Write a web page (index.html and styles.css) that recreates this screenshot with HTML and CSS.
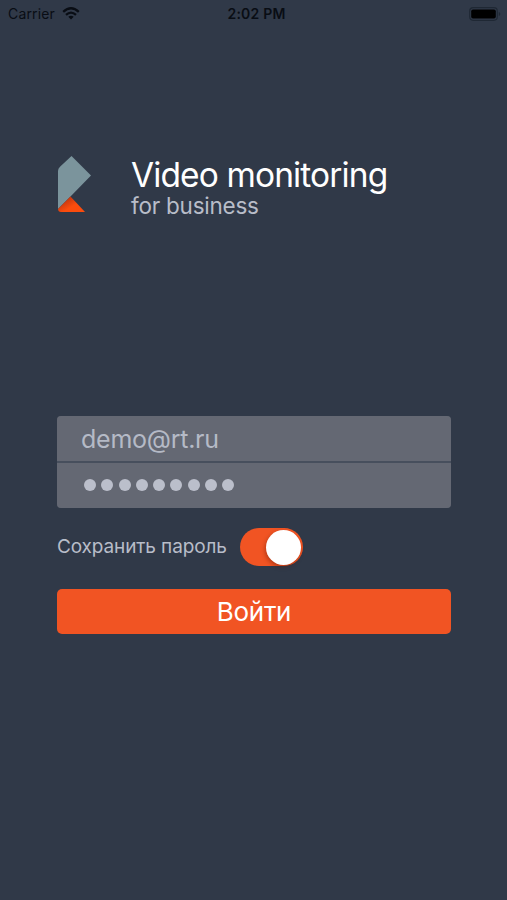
FILE: index.html
```html
<!DOCTYPE html>
<html lang="ru">
<head>
<meta charset="utf-8">
<title>Video monitoring</title>
<link rel="stylesheet" href="styles.css">
</head>
<body>
<header class="status">
  <div class="carrier"><span>Carrier</span>
    <svg class="wifi" viewBox="0 0 18 13" width="18" height="13" fill="none" stroke="#090d14" stroke-width="2.3"><path d="M1.2 4.8Q9-2.2 16.8 4.8M4 7.8Q9 3.4 14 7.8"/><path d="M6.3 9.7Q9 7.7 11.7 9.7L9 12.4Z" fill="#090d14" stroke="none"/></svg>
  </div>
  <div class="time">2:02 PM</div>
  <svg class="battery" viewBox="0 0 32 14" width="32" height="14"><rect x=".7" y=".7" width="27.6" height="12.6" rx="3.5" fill="none" stroke="#1f2834" stroke-width="1.2"/><rect x="2.2" y="2.4" width="24.6" height="9.2" rx="1.8" fill="#000"/><path d="M29.8 5v4q1.5-.5 1.5-2t-1.5-2Z" fill="#1f2834"/></svg>
</header>
<main>
  <div class="brand">
    <svg class="logo" viewBox="0 0 35 58" width="35" height="58">
      <defs><linearGradient id="fold" x1="0" y1="0" x2=".75" y2=".7"><stop offset=".25" stop-color="#b93310"/><stop offset=".8" stop-color="#fb4c0d"/></linearGradient></defs>
      <path d="M14.5 1 34 20.5 13.5 41.5 1 54V16Q1 13.5 3 11.7Z" fill="#7b949c"/>
      <path d="M13.5 41.5 28 57H4Q1.2 57 1 54Z" fill="url(#fold)"/>
    </svg>
    <div class="names">
      <h1>Video monitoring</h1>
      <p>for business</p>
    </div>
  </div>
  <form>
    <div class="fields">
      <div class="field"><span class="login">demo@rt.ru</span></div>
      <div class="field dots"><i></i><i></i><i></i><i></i><i></i><i></i><i></i><i></i><i></i></div>
    </div>
    <div class="save">
      <span class="label">Сохранить пароль</span>
      <span class="switch"><i></i></span>
    </div>
    <button type="button"><span>Войти</span></button>
  </form>
</main>
</body>
</html>
```
FILE: styles.css
```css
* { box-sizing: border-box; }
body {
  margin: 0;
  height: 900px;
  overflow: hidden;
  background: #303948;
  font-family: Inter, "Liberation Sans", sans-serif;
}
.status {
  display: grid;
  grid-template-columns: 1fr auto 1fr;
  align-items: center;
  height: 27px;
  padding: 0 6px 0 8px;
  color: #090d14;
  font-size: 14px;
}
.carrier { display: flex; align-items: center; gap: 7px; letter-spacing: .15px; }
.wifi { display: block; }
.time { padding-left: 4px; font-weight: 600; font-size: 14px; letter-spacing: .2px; }
.battery { justify-self: end; }
main { padding: 0 56px 0 57px; }
.brand { display: flex; align-items: flex-start; gap: 39px; padding-top: 128px; height: 389px; }
.names { padding-top: 1px; }
h1 {
  margin: 0;
  color: #fff;
  font-weight: 400;
  font-size: 33.5px;
  line-height: 39px;
  letter-spacing: -.88px;
  white-space: nowrap;
}
p {
  margin: 0;
  color: #b8bdc9;
  font-weight: 400;
  font-size: 22.5px;
  line-height: 22px;
  letter-spacing: -.23px;
}
.fields {
  display: grid;
  gap: 2px;
  border-radius: 4px;
  overflow: hidden;
  background: #474f5d;
}
.field {
  display: flex;
  align-items: center;
  height: 45px;
  padding-left: 24px;
  background: #646873;
}
.login { color: #b5bac6; font-size: 25px; font-weight: 400; letter-spacing: -.25px; }
.dots { gap: 5.25px; padding: 0 0 2px 27px; }
.dots i { width: 12px; height: 12px; border-radius: 50%; background: #bbbfcb; }
.save { display: flex; align-items: center; height: 38px; margin-top: 20px; }
.label { width: 183px; padding-bottom: 1px; color: #b8bdc9; font-size: 19px; font-weight: 400; letter-spacing: -.12px; white-space: nowrap; }
.switch {
  display: flex;
  justify-content: flex-end;
  width: 63px;
  height: 38px;
  padding: 1.5px 2px;
  border-radius: 19px;
  background: #f15423;
}
.switch i {
  width: 35px;
  height: 35px;
  border-radius: 50%;
  background: #fff;
  box-shadow: -1px 2px 4px rgba(90, 20, 0, .4);
}
button {
  display: block;
  width: 100%;
  height: 45px;
  margin-top: 23px;
  padding: 0;
  border: 0;
  border-radius: 5px;
  background: #f15423;
  color: #fff;
  font: 400 26px/46px Inter, "Liberation Sans", sans-serif;
  letter-spacing: -.3px;
}
```
